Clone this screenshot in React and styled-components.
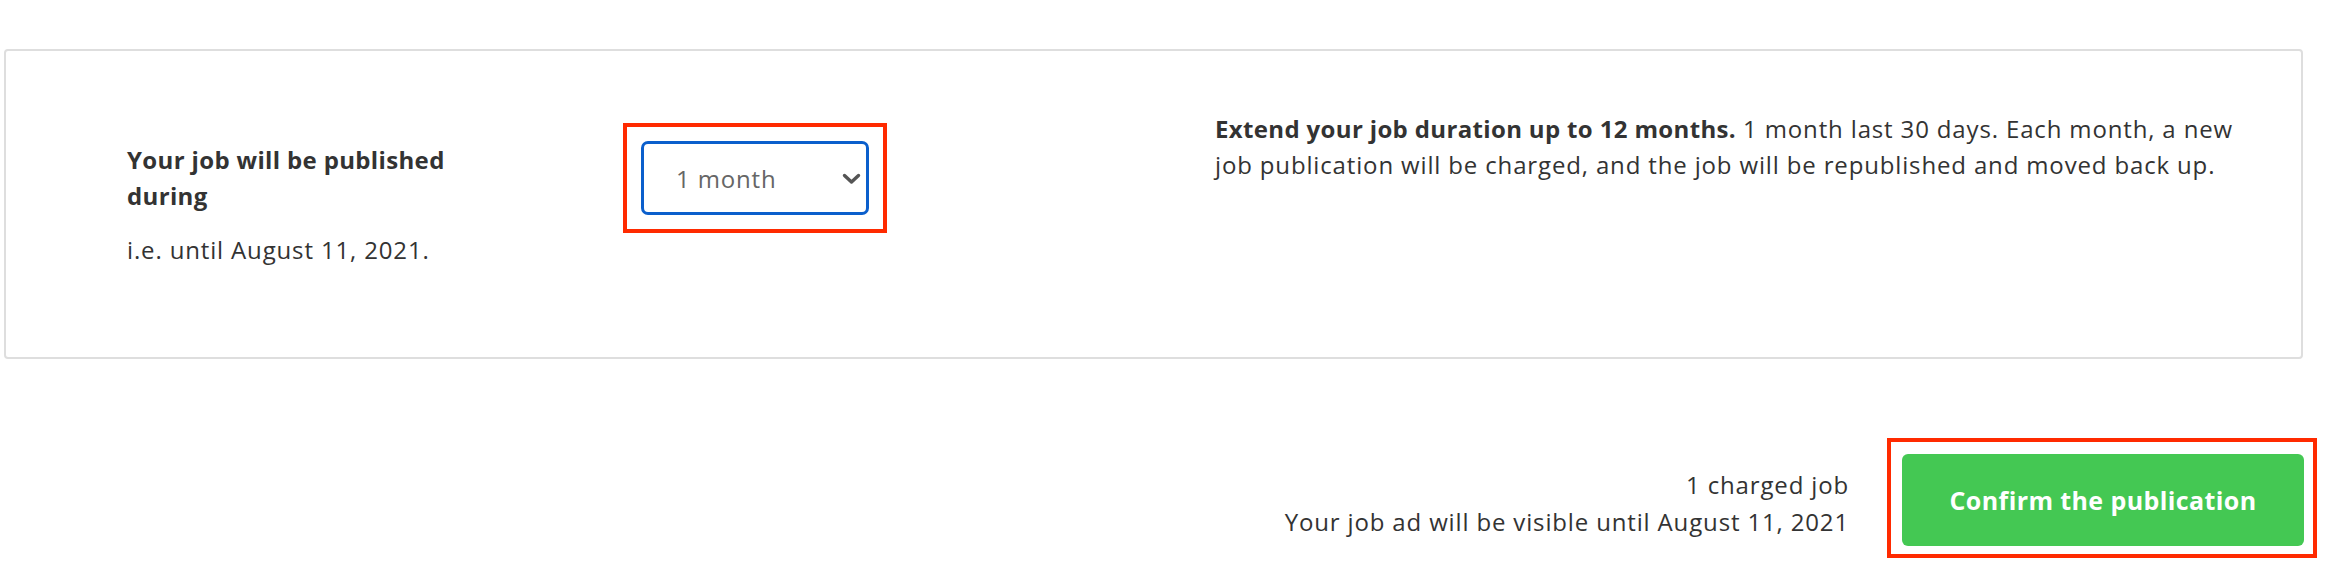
import React from "react";
import styled, { createGlobalStyle } from "styled-components";

const GlobalStyle = createGlobalStyle`
  body {
    margin: 0;
    background: #ffffff;
    font-family: "Open Sans", Lato, sans-serif;
    color: #333333;
  }
`;

const Page = styled.div`
  padding: 49px 25px 0 4px;
`;

const Card = styled.section`
  box-sizing: border-box;
  height: 310px;
  border: 2px solid #dedede;
  border-radius: 4px;
  padding: 60px 0 0 121px;
  display: flex;
  align-items: flex-start;
`;

const DurationLabel = styled.div`
  width: 345px;
  margin: 31px 151px 0 0;
  font-size: 24px;
  line-height: 36px;
  letter-spacing: 0.85px;
`;

const LabelTitle = styled.div`
  font-weight: 700;
  letter-spacing: 0.35px;
`;

const LabelHint = styled.div`
  margin-top: 18px;
`;

const Highlight = styled.div`
  border: 4px solid #ff2a00;
  padding: ${(p) => p.$pad};
  margin-top: ${(p) => p.$top || "0"};
`;

const SelectWrap = styled.div`
  position: relative;
  width: 228px;
  height: 74px;
`;

const Select = styled.select`
  appearance: none;
  box-sizing: border-box;
  width: 100%;
  height: 100%;
  border: 3px solid #0b5fcc;
  border-radius: 7px;
  background: #fff;
  padding: 0 0 0 32px;
  font-family: "Open Sans", Lato, sans-serif;
  font-size: 24px;
  letter-spacing: 0.85px;
  color: #666666;
  outline: none;
`;

const Chevron = styled.svg`
  position: absolute;
  right: 8px;
  top: 32px;
  pointer-events: none;
`;

const Info = styled.p`
  margin: 0 0 0 328px;
  width: 1035px;
  font-size: 24px;
  line-height: 36px;
  letter-spacing: 0.85px;
  color: #333;

  strong {
    font-weight: 700;
    letter-spacing: 0.35px;
  }
`;

const Footer = styled.div`
  display: flex;
  justify-content: flex-end;
  align-items: center;
  gap: 38px;
  margin: 79px -14px 0 0;
`;

const Summary = styled.div`
  padding-top: 10px;
  text-align: right;
  font-size: 24px;
  line-height: 37px;
  letter-spacing: 0.85px;
  color: #333;
`;

const ConfirmButton = styled.button`
  width: 402px;
  height: 92px;
  border: none;
  border-radius: 6px;
  background: #44c853;
  color: #ffffff;
  font-family: "Open Sans", Lato, sans-serif;
  font-size: 25px;
  font-weight: 700;
  letter-spacing: 0.4px;
  cursor: pointer;
`;

export default function App() {
  return (
    <>
      <GlobalStyle />
      <Page>
        <Card>
          <DurationLabel>
            <LabelTitle>Your job will be published during</LabelTitle>
            <LabelHint>i.e. until August 11, 2021.</LabelHint>
          </DurationLabel>
          <Highlight $pad="14px" $top="12px">
            <SelectWrap>
              <Select defaultValue="1">
                <option value="1">1 month</option>
                <option value="2">2 months</option>
                <option value="3">3 months</option>
                <option value="6">6 months</option>
                <option value="12">12 months</option>
              </Select>
              <Chevron width="19" height="12" viewBox="0 0 19 12">
                <path d="M2.5 2.5 L9.5 9 L16.5 2.5" fill="none" stroke="#555" strokeWidth="3.4" strokeLinecap="round" strokeLinejoin="round" />
              </Chevron>
            </SelectWrap>
          </Highlight>
          <Info>
            <strong>Extend your job duration up to 12 months.</strong> 1 month last 30 days. Each month, a new job publication will be charged, and the job will be republished and moved back up.
          </Info>
        </Card>
        <Footer>
          <Summary>
            <div>1 charged job</div>
            <div>Your job ad will be visible until August 11, 2021</div>
          </Summary>
          <Highlight $pad="12px 9px 8px 11px">
            <ConfirmButton>Confirm the publication</ConfirmButton>
          </Highlight>
        </Footer>
      </Page>
    </>
  );
}
